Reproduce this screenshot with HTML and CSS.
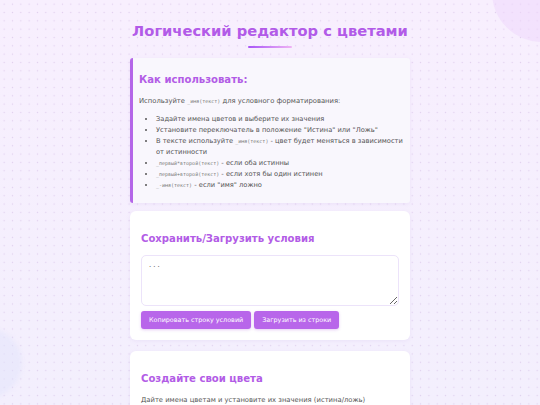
FILE: index.html
```html
<!DOCTYPE html>
<html lang="ru">
<head>
<meta charset="utf-8">
<title>Логический редактор с цветами</title>
<link rel="stylesheet" href="styles.css">
</head>
<body>
<div class="blob blob-tr"></div>
<div class="blob blob-bl"></div>
<main class="container">
  <h1 class="title">Логический редактор с цветами</h1>
  <div class="title-bar"></div>

  <section class="card card-info">
    <h2 class="card-title">Как использовать:</h2>
    <p class="text">Используйте <code>_имя(текст)</code> для условного форматирования:</p>
    <ul class="list">
      <li>Задайте имена цветов и выберите их значения</li>
      <li>Установите переключатель в положение "Истина" или "Ложь"</li>
      <li>В тексте используйте <code>_имя(текст)</code> - цвет будет меняться в зависимости от истинности</li>
      <li><code>_первый*второй(текст)</code> - если оба истинны</li>
      <li><code>_первый+второй(текст)</code> - если хотя бы один истинен</li>
      <li><code>_-имя(текст)</code> - если "имя" ложно</li>
    </ul>
  </section>

  <section class="card card-save">
    <h2 class="card-title">Сохранить/Загрузить условия</h2>
    <textarea class="area" placeholder="..."></textarea>
    <div class="buttons">
      <button class="btn">Копировать строку условий</button>
      <button class="btn">Загрузить из строки</button>
    </div>
  </section>

  <section class="card">
    <h2 class="card-title">Создайте свои цвета</h2>
    <p class="text">Дайте имена цветам и установите их значения (истина/ложь)</p>
  </section>
</main>
</body>
</html>
```
FILE: styles.css
```css
html, body {
  margin: 0;
  padding: 0;
}
body {
  font-family: "DejaVu Sans", Verdana, sans-serif;
  color: #555;
  height: 405px;
  overflow: hidden;
  background-color: #f6effd;
  background-image:
    radial-gradient(circle, rgba(190, 160, 215, 0.38) 0.6px, transparent 1px),
    linear-gradient(180deg, #f8effe 0%, #f3effd 100%);
  background-size: 8.33px 8.33px, 100% 100%;
  background-position: 0 0, 0 0;
  position: relative;
}
.blob {
  position: absolute;
  border-radius: 50%;
  pointer-events: none;
}
.blob-tr {
  width: 100px;
  height: 100px;
  right: -52px;
  top: -58px;
  background: rgba(238, 215, 252, 0.55);
}
.blob-bl {
  width: 70px;
  height: 70px;
  left: -48px;
  top: 328px;
  background: rgba(225, 228, 252, 0.5);
  filter: blur(2px);
}
.container {
  position: relative;
  width: 280px;
  margin: 0 auto;
  padding-top: 20px;
}
.title {
  margin: 0;
  text-align: center;
  font-size: 14.7px;
  line-height: 22px;
  font-weight: bold;
  color: #b25be8;
  white-space: nowrap;
}
.title-bar {
  width: 44px;
  height: 2px;
  margin: 4px auto 10px;
  border-radius: 1px;
  background: linear-gradient(90deg, #a855f7, #f0b4f4);
}
.card {
  background: #fff;
  border-radius: 6px;
  padding: 14px 11px 11px;
  margin-bottom: 11px;
  box-shadow: 0 1px 4px rgba(170, 130, 210, 0.12);
}
.card-info {
  background: #f9f7fd;
  border-left: 3px solid #b466e8;
  border-radius: 3px;
  padding: 15px 2px 12px 6px;
  margin-bottom: 8px;
}
.card-title {
  margin: 0 0 9px;
  font-size: 10.1px;
  line-height: 14px;
  font-weight: bold;
  color: #b25ce6;
}
.card + .card .card-title {
  margin-top: 7px;
}
.text {
  margin: 0 0 7px;
  font-size: 6.8px;
  line-height: 11px;
}
code {
  font-family: "DejaVu Sans Mono", monospace;
  font-size: 5px;
  color: #777;
}
.list {
  margin: 0;
  padding-left: 17px;
  font-size: 6.7px;
  line-height: 11px;
}
.area {
  display: block;
  box-sizing: border-box;
  width: 100%;
  height: 51px;
  margin: 0 0 5px;
  padding: 5px 6px;
  border: 1px solid #ece3fa;
  border-radius: 5px;
  font-family: "DejaVu Sans Mono", monospace;
  font-size: 7px;
  color: #555;
  background: #fff;
  resize: vertical;
}
.area::placeholder {
  color: #777;
}
.buttons {
  display: flex;
  gap: 3px;
}
.btn {
  height: 18px;
  padding: 0 8px;
  border: none;
  border-radius: 3px;
  background: #b866ea;
  color: #fff;
  font-family: "DejaVu Sans", Verdana, sans-serif;
  font-size: 6.4px;
  box-shadow: 0 1px 3px rgba(170, 90, 220, 0.3);
}
```
